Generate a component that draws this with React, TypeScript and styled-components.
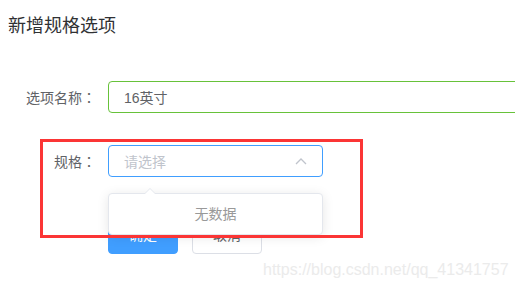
import React from "react";
import styled, { createGlobalStyle } from "styled-components";

const GlobalStyle = createGlobalStyle`
  html, body {
    margin: 0;
    padding: 0;
    overflow: hidden;
    background: #fff;
  }
  body {
    font-family: "Liberation Sans", "Noto Sans CJK SC", sans-serif;
  }
`;

const Page = styled.div`
  position: relative;
  width: 515px;
  height: 289px;
  padding: 14px 8px 0;
  box-sizing: border-box;
  overflow: hidden;
`;

const Title = styled.div`
  font-size: 18px;
  line-height: 24px;
  color: #303133;
`;

const Form = styled.div`
  margin-top: 43px;
  display: flex;
  flex-direction: column;
`;

const Item = styled.div<{ $gap: number }>`
  display: flex;
  align-items: flex-start;
  margin-bottom: ${(p) => p.$gap}px;
`;

const Label = styled.label`
  width: 100px;
  flex: none;
  box-sizing: border-box;
  padding-right: 12px;
  text-align: right;
  font-size: 14px;
  line-height: 32px;
  color: #606266;
`;

const Colon = styled.span`
  font-family: "Noto Sans CJK TC", sans-serif;
`;

const Input = styled.div<{ $width: number; $border: string }>`
  width: ${(p) => p.$width}px;
  height: 32px;
  box-sizing: border-box;
  border: 1px solid ${(p) => p.$border};
  border-radius: 4px;
  padding: 0 15px;
  display: flex;
  align-items: center;
  justify-content: space-between;
  font-size: 14px;
  color: #606266;
  flex: none;
`;

const Placeholder = styled.span`
  color: #c0c4cc;
`;

const SelectWrap = styled.div`
  position: relative;
`;

const Popper = styled.div`
  position: absolute;
  top: 48px;
  left: 0;
  width: 215px;
  box-sizing: border-box;
  border: 1px solid #e4e7ed;
  border-radius: 4px;
  background: #fff;
  box-shadow: 0 2px 12px rgba(0, 0, 0, 0.1);
  padding: 10px 0;
  text-align: center;
  font-size: 14px;
  line-height: 20px;
  color: #999;
  z-index: 2;

  &::before,
  &::after {
    content: "";
    position: absolute;
    left: 35px;
    border: 6px solid transparent;
    border-top-width: 0;
  }
  &::before {
    top: -6px;
    border-bottom-color: #e4e7ed;
  }
  &::after {
    top: -5px;
    border-bottom-color: #fff;
  }
`;

const Buttons = styled.div`
  display: flex;
  gap: 14px;
  margin-left: 100px;
`;

const Button = styled.button<{ $primary?: boolean }>`
  width: 70px;
  height: 40px;
  border-radius: 4px;
  font-family: inherit;
  font-size: 14px;
  border: 1px solid ${(p) => (p.$primary ? "#409eff" : "#dcdfe6")};
  background: ${(p) => (p.$primary ? "#409eff" : "#fff")};
  color: ${(p) => (p.$primary ? "#fff" : "#606266")};
  padding: 0;
`;

const Highlight = styled.div`
  position: absolute;
  left: 40px;
  top: 139px;
  width: 323px;
  height: 99px;
  box-sizing: border-box;
  border: 3px solid #fb3535;
  z-index: 3;
  pointer-events: none;
`;

const Watermark = styled.div`
  position: absolute;
  left: 263px;
  top: 260px;
  font-family: "Liberation Sans", sans-serif;
  font-size: 16px;
  line-height: 20px;
  color: #ebebeb;
  z-index: 4;
`;

const ArrowUp = () => (
  <svg width="12" height="8" viewBox="0 0 12 8" fill="none">
    <path d="M1 7 L6 2 L11 7" stroke="#c0c4cc" strokeWidth="1.3" />
  </svg>
);

export default function App() {
  return (
    <Page>
      <GlobalStyle />
      <Title>新增规格选项</Title>
      <Form>
        <Item $gap={31}>
          <Label>
            选项名称<Colon>：</Colon>
          </Label>
          <Input $width={460} $border="#67c23a">16英寸</Input>
        </Item>
        <Item $gap={36}>
          <Label>
            规格<Colon>：</Colon>
          </Label>
          <SelectWrap>
            <Input $width={215} $border="#409eff">
              <Placeholder>请选择</Placeholder>
              <ArrowUp />
            </Input>
            <Popper>无数据</Popper>
          </SelectWrap>
        </Item>
        <Buttons>
          <Button $primary>确定</Button>
          <Button>取消</Button>
        </Buttons>
      </Form>
      <Highlight />
      <Watermark>https://blog.csdn.net/qq_41341757</Watermark>
    </Page>
  );
}
